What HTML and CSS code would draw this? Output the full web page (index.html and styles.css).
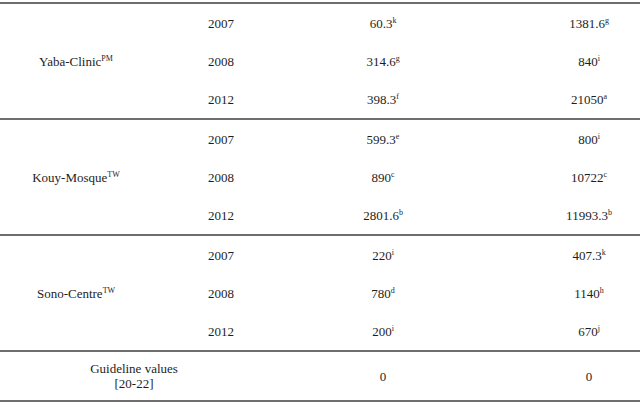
FILE: index.html
```html
<!DOCTYPE html>
<html lang="en">
  <head>
    <meta charset="UTF-8" />
    <title>Site concentrations</title>
    <link rel="stylesheet" href="styles.css">
  </head>
  <body>
    <table class="data-table">
      <colgroup>
        <col class="col-site" />
        <col class="col-year" />
        <col class="col-a" />
        <col class="col-b" />
      </colgroup>
      <tbody class="group">
        <tr>
          <td class="site" rowspan="3">Yaba-Clinic<sup>PM</sup></td>
          <td>2007</td>
          <td>60.3<sup>k</sup></td>
          <td class="last">1381.6<sup>g</sup></td>
        </tr>
        <tr>
          <td>2008</td>
          <td>314.6<sup>g</sup></td>
          <td class="last">840<sup>i</sup></td>
        </tr>
        <tr>
          <td>2012</td>
          <td>398.3<sup>f</sup></td>
          <td class="last">21050<sup>a</sup></td>
        </tr>
      </tbody>
      <tbody class="group">
        <tr>
          <td class="site" rowspan="3">Kouy-Mosque<sup>TW</sup></td>
          <td>2007</td>
          <td>599.3<sup>e</sup></td>
          <td class="last">800<sup>i</sup></td>
        </tr>
        <tr>
          <td>2008</td>
          <td>890<sup>c</sup></td>
          <td class="last">10722<sup>c</sup></td>
        </tr>
        <tr>
          <td>2012</td>
          <td>2801.6<sup>b</sup></td>
          <td class="last">11993.3<sup>b</sup></td>
        </tr>
      </tbody>
      <tbody class="group">
        <tr>
          <td class="site" rowspan="3">Sono-Centre<sup>TW</sup></td>
          <td>2007</td>
          <td>220<sup>i</sup></td>
          <td class="last">407.3<sup>k</sup></td>
        </tr>
        <tr>
          <td>2008</td>
          <td>780<sup>d</sup></td>
          <td class="last">1140<sup>h</sup></td>
        </tr>
        <tr>
          <td>2012</td>
          <td>200<sup>i</sup></td>
          <td class="last">670<sup>j</sup></td>
        </tr>
      </tbody>
      <tbody class="group footer">
        <tr>
          <td class="guide" colspan="2">Guideline values<br />[20-22]</td>
          <td>0</td>
          <td class="last">0</td>
        </tr>
      </tbody>
    </table>
  </body>
</html>
```

FILE: styles.css
```css
body {
  margin: 0;
  padding-top: 2px;
  background-color: #ffffff;
  font-family: "Liberation Serif", "Times New Roman", serif;
  font-size: 13px;
  color: #1e1e1e;
}

.data-table {
  width: 640px;
  border-collapse: collapse;
  border-bottom: 2px solid #6e6e6e;
}

.col-site {
  width: 152px;
}
.col-year {
  width: 138px;
}
.col-a {
  width: 186px;
}
.col-b {
  width: 164px;
}

.group {
  border-top: 2px solid #6e6e6e;
}

.data-table td {
  height: 38px;
  padding: 0;
  text-align: center;
  vertical-align: middle;
  line-height: 15px;
}

.data-table td.site {
  text-align: center;
}

.data-table td.last {
  padding-left: 62px;
}

.footer td {
  height: 48px;
}

.data-table td.guide {
  padding-right: 22px;
}

sup {
  font-size: 8px;
  line-height: 0;
  vertical-align: 5px;
}
```
